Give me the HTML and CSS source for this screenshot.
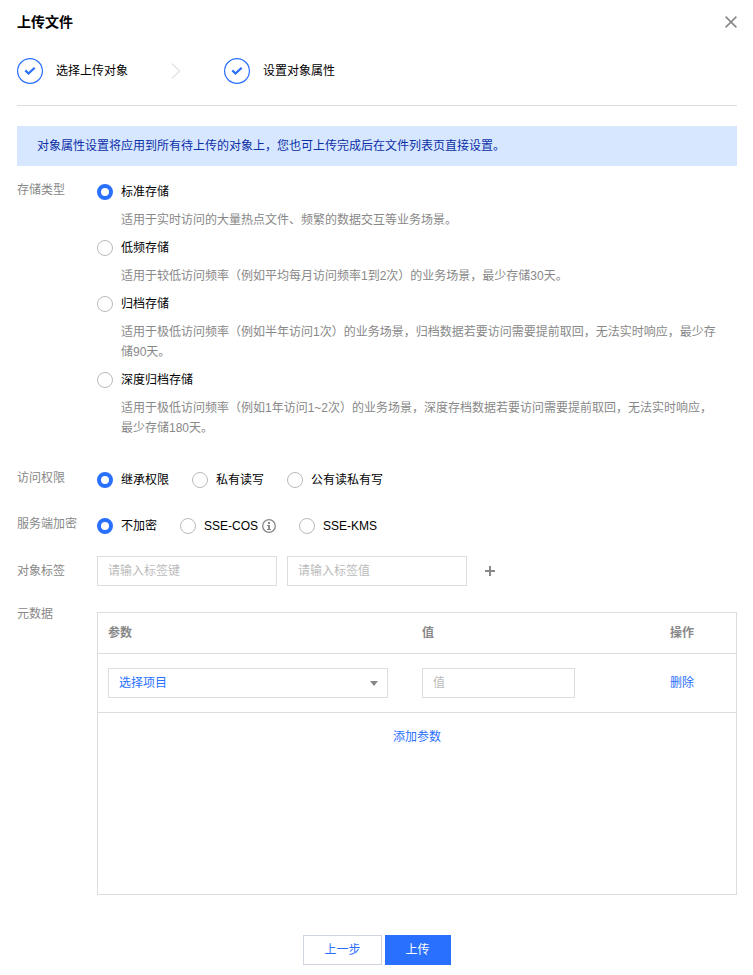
FILE: index.html
```html
<!DOCTYPE html>
<html lang="zh-CN">
<head>
<meta charset="utf-8">
<meta name="viewport" content="width=device-width, initial-scale=1">
<title>上传文件</title>
<link rel="stylesheet" href="styles.css">
</head>
<body>
<main class="dialog">
  <header class="dialog-head">
    <h1 class="dialog-title">上传文件</h1>
    <button class="icon-button" type="button" aria-label="关闭">
      <svg width="12" height="12" viewBox="0 0 12 12"><path d="M.6.6l10.8 10.8M11.4.6L.6 11.4" fill="none" stroke="#888" stroke-width="1.6"/></svg>
    </button>
  </header>

  <ol class="steps">
    <li class="step">
      <svg width="26" height="26" viewBox="0 0 26 26" aria-hidden="true"><circle cx="13" cy="13" r="12.4" fill="none" stroke="#2970ff" stroke-width="1.2"/><path d="M8.3 12.4l3.2 3.1 6.2-5.8" fill="none" stroke="#2970ff" stroke-width="2.2"/></svg>
      <span>选择上传对象</span>
    </li>
    <li class="step-arrow" aria-hidden="true">
      <svg width="10" height="16" viewBox="0 0 10 16"><path d="M.8.5L8.6 8 .8 15.5" fill="none" stroke="#ccc"/></svg>
    </li>
    <li class="step">
      <svg width="26" height="26" viewBox="0 0 26 26" aria-hidden="true"><circle cx="13" cy="13" r="12.4" fill="none" stroke="#2970ff" stroke-width="1.2"/><path d="M8.3 12.4l3.2 3.1 6.2-5.8" fill="none" stroke="#2970ff" stroke-width="2.2"/></svg>
      <span>设置对象属性</span>
    </li>
  </ol>

  <p class="notice">对象属性设置将应用到所有待上传的对象上，您也可上传完成后在文件列表页直接设置。</p>

  <form class="form">
    <div class="row" role="radiogroup" aria-labelledby="storage-label">
      <span class="row-label" id="storage-label">存储类型</span>
      <div class="options-column">
        <label class="option"><input class="radio" type="radio" name="storage" checked>标准存储</label>
        <p class="hint">适用于实时访问的大量热点文件、频繁的数据交互等业务场景。</p>
        <label class="option"><input class="radio" type="radio" name="storage">低频存储</label>
        <p class="hint">适用于较低访问频率（例如平均每月访问频率1到2次）的业务场景，最少存储30天。</p>
        <label class="option"><input class="radio" type="radio" name="storage">归档存储</label>
        <p class="hint">适用于极低访问频率（例如半年访问1次）的业务场景，归档数据若要访问需要提前取回，无法实时响应，最少存储90天。</p>
        <label class="option"><input class="radio" type="radio" name="storage">深度归档存储</label>
        <p class="hint">适用于极低访问频率（例如1年访问1~2次）的业务场景，深度存档数据若要访问需要提前取回，无法实时响应，最少存储180天。</p>
      </div>
    </div>

    <div class="row row-access" role="radiogroup" aria-labelledby="access-label">
      <span class="row-label" id="access-label">访问权限</span>
      <div class="options-line">
        <label class="option"><input class="radio" type="radio" name="access" checked>继承权限</label>
        <label class="option"><input class="radio" type="radio" name="access">私有读写</label>
        <label class="option"><input class="radio" type="radio" name="access">公有读私有写</label>
      </div>
    </div>

    <div class="row row-encrypt" role="radiogroup" aria-labelledby="encrypt-label">
      <span class="row-label" id="encrypt-label">服务端加密</span>
      <div class="options-line">
        <label class="option"><input class="radio" type="radio" name="encrypt" checked>不加密</label>
        <label class="option"><input class="radio" type="radio" name="encrypt">SSE-COS
          <svg class="info" width="14" height="14" viewBox="0 0 14 14" aria-hidden="true"><circle cx="7" cy="7" r="6.3" fill="none" stroke="#888" stroke-width="1.3"/><path d="M6 3h2v2H6zM5 6h3v4h1v1H5v-1h1V7H5z" fill="#888"/></svg></label>
        <label class="option"><input class="radio" type="radio" name="encrypt">SSE-KMS</label>
      </div>
    </div>

    <div class="row row-tags">
      <label class="row-label" for="tag-key">对象标签</label>
      <div class="tag-fields">
        <input class="field tag-field" id="tag-key" type="text" placeholder="请输入标签键">
        <input class="field tag-field" type="text" placeholder="请输入标签值" aria-label="标签值">
        <button class="icon-button add-tag" type="button" aria-label="添加标签">
          <svg width="10" height="10" viewBox="0 0 10 10"><path d="M5 0v10M0 5h10" fill="none" stroke="#888" stroke-width="2"/></svg>
        </button>
      </div>
    </div>

    <div class="row row-meta">
      <span class="row-label">元数据</span>
      <div class="meta-box">
        <table class="meta-table">
          <thead>
            <tr><th class="col-name">参数</th><th>值</th><th class="col-action">操作</th></tr>
          </thead>
          <tbody>
            <tr>
              <td><div class="select-wrap"><select class="field select" aria-label="参数"><option>选择项目</option></select><svg class="caret" width="8" height="5" viewBox="0 0 8 5" aria-hidden="true"><path d="M0 0h8L4 5z" fill="#888"/></svg></div></td>
              <td><input class="field value-field" type="text" placeholder="值" aria-label="值"></td>
              <td><button class="link-button" type="button">删除</button></td>
            </tr>
          </tbody>
        </table>
        <div class="meta-add"><button class="link-button" type="button">添加参数</button></div>
      </div>
    </div>

    <footer class="actions">
      <button class="button" type="button">上一步</button>
      <button class="button button-primary" type="submit">上传</button>
    </footer>
  </form>
</main>
</body>
</html>
```

FILE: styles.css
```css
* {
  box-sizing: border-box;
}

body {
  margin: 0;
  background: #fff;
  color: #000;
  font: 12px/20px "Liberation Sans", "Noto Sans CJK SC", sans-serif;
}

button,
input,
select {
  margin: 0;
  font: inherit;
}

.dialog {
  padding: 12px 16px 10px 17px;
}

.dialog-head {
  display: flex;
  align-items: center;
  justify-content: space-between;
}

.dialog-title {
  margin: 0;
  font-size: 14px;
  line-height: 20px;
  font-weight: 700;
}

.icon-button {
  display: flex;
  padding: 0;
  border: 0;
  background: none;
  cursor: pointer;
}

.steps {
  display: flex;
  align-items: center;
  gap: 43px;
  margin: 26px 0 0;
  padding: 0 0 21px;
  border-bottom: 1px solid #ddd;
  list-style: none;
}

.step {
  display: flex;
  align-items: center;
  gap: 13px;
}

.step-arrow {
  display: flex;
}

.notice {
  margin: 20px 0 14px;
  padding: 10px 20px;
  background: #d6e7ff;
  color: #0b2fa8;
}

.row {
  display: grid;
  grid-template-columns: 80px minmax(0, 1fr);
  align-items: start;
}

.row-label {
  color: #888;
}

.row-access {
  margin-top: 30px;
}

.row-encrypt {
  margin-top: 24px;
}

.row-tags {
  margin-top: 20px;
  align-items: center;
}

.row-meta {
  margin-top: 18px;
}

.options-column {
  display: flex;
  flex-direction: column;
  align-items: flex-start;
  gap: 8px;
  padding: 2px 20px 0 0;
}

.options-line {
  display: flex;
  flex-wrap: wrap;
  gap: 23px;
  padding-top: 2px;
}

.option {
  display: flex;
  align-items: center;
}

.radio {
  appearance: none;
  width: 16px;
  height: 16px;
  margin-right: 8px;
  border: 1px solid #bbb;
  border-radius: 50%;
  background: #fff;
}

.radio:checked {
  border: 4px solid #2970ff;
}

.info {
  margin-left: 4px;
}

.hint {
  margin: 0;
  padding-left: 24px;
  color: #888;
}

.field {
  height: 30px;
  padding: 0 10px;
  border: 1px solid #ddd;
  border-radius: 0;
  background: #fff;
  color: #000;
}

.field::placeholder {
  color: #bbb;
  opacity: 1;
}

.tag-fields {
  display: flex;
  align-items: center;
  gap: 10px;
}

.tag-field {
  width: 180px;
}

.add-tag {
  padding: 8px;
}

.meta-box {
  min-height: 283px;
  margin-top: 8px;
  border: 1px solid #ddd;
}

.meta-table {
  width: 100%;
  table-layout: fixed;
  border-collapse: collapse;
}

.meta-table th,
.meta-table td {
  padding: 10px;
  border-bottom: 1px solid #ddd;
  text-align: left;
}

.meta-table th {
  color: #888;
  font-weight: 700;
}

.meta-table td {
  padding: 14px 10px;
}

.col-name {
  width: 49.2%;
}

.col-action {
  width: 76px;
}

.select-wrap {
  display: grid;
  max-width: 280px;
  align-items: center;
}

.select {
  grid-area: 1 / 1;
  appearance: none;
  width: 100%;
  color: #2970ff;
}

.caret {
  grid-area: 1 / 1;
  justify-self: end;
  margin-right: 10px;
  pointer-events: none;
}

.value-field {
  display: block;
  width: 153px;
  max-width: 100%;
}

.link-button {
  padding: 0;
  border: 0;
  background: none;
  color: #2970ff;
  cursor: pointer;
}

.meta-add {
  padding: 14px 10px;
  text-align: center;
}

.actions {
  display: flex;
  justify-content: center;
  gap: 3px;
  margin-top: 40px;
}

.button {
  height: 30px;
  padding: 0 20px;
  border: 1px solid #cfd5de;
  background: #fff;
  color: #2970ff;
  cursor: pointer;
}

.button-primary {
  border-color: #2970ff;
  background: #2970ff;
  color: #fff;
}
```
